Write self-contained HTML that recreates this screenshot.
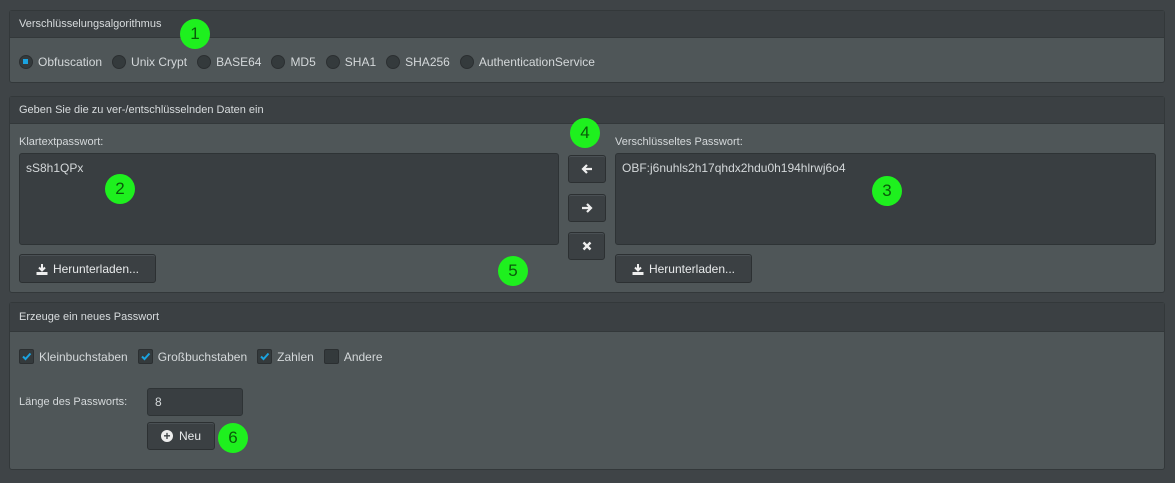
<html><head><style>
body{margin:0;width:1175px;height:483px;background:#3f4447;font-family:"Liberation Sans","DejaVu Sans",sans-serif;font-size:12px;color:#d4d8da;position:relative;overflow:hidden}
.p{position:absolute;left:9px;width:1156px;background:#4f5658;border:1px solid #33383a;border-radius:3px;box-sizing:border-box}
.h{background:#3b4043;border-bottom:1px solid #33383a;height:26px;line-height:26px;padding-left:9px;font-size:11px;color:#d8dcde}
.a{position:absolute;font-size:12px;white-space:nowrap}
.it{display:inline-block;margin-right:10px}
.ta{position:absolute;background:#393e41;border:1px solid #2e3335;border-radius:3px;box-sizing:border-box;padding:7px 6px;font-size:12px}
.btn{position:absolute;background:#3b4043;border:1px solid #2c3032;border-radius:3px;box-sizing:border-box;color:#e8eaeb;font-size:12px;display:flex;align-items:center;justify-content:center;box-shadow:inset 0 1px 0 #4a5054}
.r{display:inline-block;width:12px;height:12px;border-radius:50%;background:#343a3c;border:1px solid #2b2f31;vertical-align:-3px;margin-right:5px;position:relative}
.cb{display:inline-block;width:13px;height:13px;border-radius:2px;background:#343a3c;border:1px solid #2b2f31;vertical-align:-3px;margin-right:5px;position:relative}
.g{position:absolute;width:30px;height:30px;border-radius:50%;background:#1ef01e;color:#0a5a0a;font-size:17px;text-align:center;line-height:30px}
</style></head><body>
<div class="p" style="top:10px;height:73px"><div class="h">Verschlüsselungsalgorithmus</div></div>
<div class="a" style="left:19px;top:55px">
<span class="it"><span class="r"><span style="position:absolute;left:3px;top:3px;width:5px;height:5px;background:#1aa3e0"></span></span>Obfuscation</span><span class="it"><span class="r"></span>Unix Crypt</span><span class="it"><span class="r"></span>BASE64</span><span class="it"><span class="r"></span>MD5</span><span class="it"><span class="r"></span>SHA1</span><span class="it"><span class="r"></span>SHA256</span><span class="it"><span class="r"></span>AuthenticationService</span></div>

<div class="p" style="top:96px;height:197px"><div class="h">Geben Sie die zu ver-/entschlüsselnden Daten ein</div></div>
<div class="a" style="left:19px;top:136px;font-size:11px">Klartextpasswort:</div>
<div class="a" style="left:615px;top:136px;font-size:11px">Verschlüsseltes Passwort:</div>
<div class="ta" style="left:19px;top:153px;width:540px;height:92px">sS8h1QPx</div>
<div class="ta" style="left:615px;top:153px;width:541px;height:92px">OBF:j6nuhls2h17qhdx2hdu0h194hlrwj6o4</div>
<div class="btn" style="left:568px;top:155px;width:38px;height:28px"><svg width="12" height="12" viewBox="0 0 12 12"><path d="M11 6H2M6 2L2 6l4 4" stroke="#eee" stroke-width="2.2" fill="none"/></svg></div>
<div class="btn" style="left:568px;top:194px;width:38px;height:28px"><svg width="12" height="12" viewBox="0 0 12 12"><path d="M1 6h9M6 2l4 4-4 4" stroke="#eee" stroke-width="2.2" fill="none"/></svg></div>
<div class="btn" style="left:568px;top:232px;width:37px;height:28px"><svg width="10" height="10" viewBox="0 0 10 10"><path d="M1.5 1.5l7 7M8.5 1.5l-7 7" stroke="#eee" stroke-width="2.4"/></svg></div>
<div class="btn" style="left:19px;top:254px;width:137px;height:29px"><svg width="12" height="12" viewBox="0 0 12 12" style="margin-right:5px"><path d="M6 1v6M3 4.5l3 3 3-3" stroke="#eee" stroke-width="2" fill="none"/><rect x="0.5" y="9" width="11" height="3" fill="#eee"/></svg>Herunterladen...</div>
<div class="btn" style="left:615px;top:254px;width:137px;height:29px"><svg width="12" height="12" viewBox="0 0 12 12" style="margin-right:5px"><path d="M6 1v6M3 4.5l3 3 3-3" stroke="#eee" stroke-width="2" fill="none"/><rect x="0.5" y="9" width="11" height="3" fill="#eee"/></svg>Herunterladen...</div>

<div class="p" style="top:302px;height:168px"><div class="h" style="height:28px;line-height:28px">Erzeuge ein neues Passwort</div></div>
<div class="a" style="left:19px;top:349px">
<span class="it"><span class="cb"><svg style="position:absolute;left:1px;top:1px" width="11" height="11" viewBox="0 0 11 11"><path d="M2 5.5l2.5 2.5L9.5 2.5" stroke="#1aa3e0" stroke-width="2" fill="none"/></svg></span>Kleinbuchstaben</span><span class="it"><span class="cb"><svg style="position:absolute;left:1px;top:1px" width="11" height="11" viewBox="0 0 11 11"><path d="M2 5.5l2.5 2.5L9.5 2.5" stroke="#1aa3e0" stroke-width="2" fill="none"/></svg></span>Großbuchstaben</span><span class="it"><span class="cb"><svg style="position:absolute;left:1px;top:1px" width="11" height="11" viewBox="0 0 11 11"><path d="M2 5.5l2.5 2.5L9.5 2.5" stroke="#1aa3e0" stroke-width="2" fill="none"/></svg></span>Zahlen</span><span class="it"><span class="cb"></span>Andere</span></div>
<div class="a" style="left:19px;top:396px;font-size:11px">Länge des Passworts:</div>
<div class="ta" style="left:147px;top:388px;width:96px;height:28px;padding:6px 7px">8</div>
<div class="btn" style="left:147px;top:422px;width:68px;height:28px"><span style="display:inline-block;width:12px;height:12px;border-radius:50%;background:#eee;color:#3b4043;font-size:12px;line-height:12px;text-align:center;font-weight:bold;margin-right:6px">+</span>Neu</div>

<div class="g" style="left:180px;top:19px">1</div>
<div class="g" style="left:105px;top:174px">2</div>
<div class="g" style="left:872px;top:176px">3</div>
<div class="g" style="left:570px;top:118px">4</div>
<div class="g" style="left:498px;top:256px">5</div>
<div class="g" style="left:218px;top:423px">6</div>
</body></html>
